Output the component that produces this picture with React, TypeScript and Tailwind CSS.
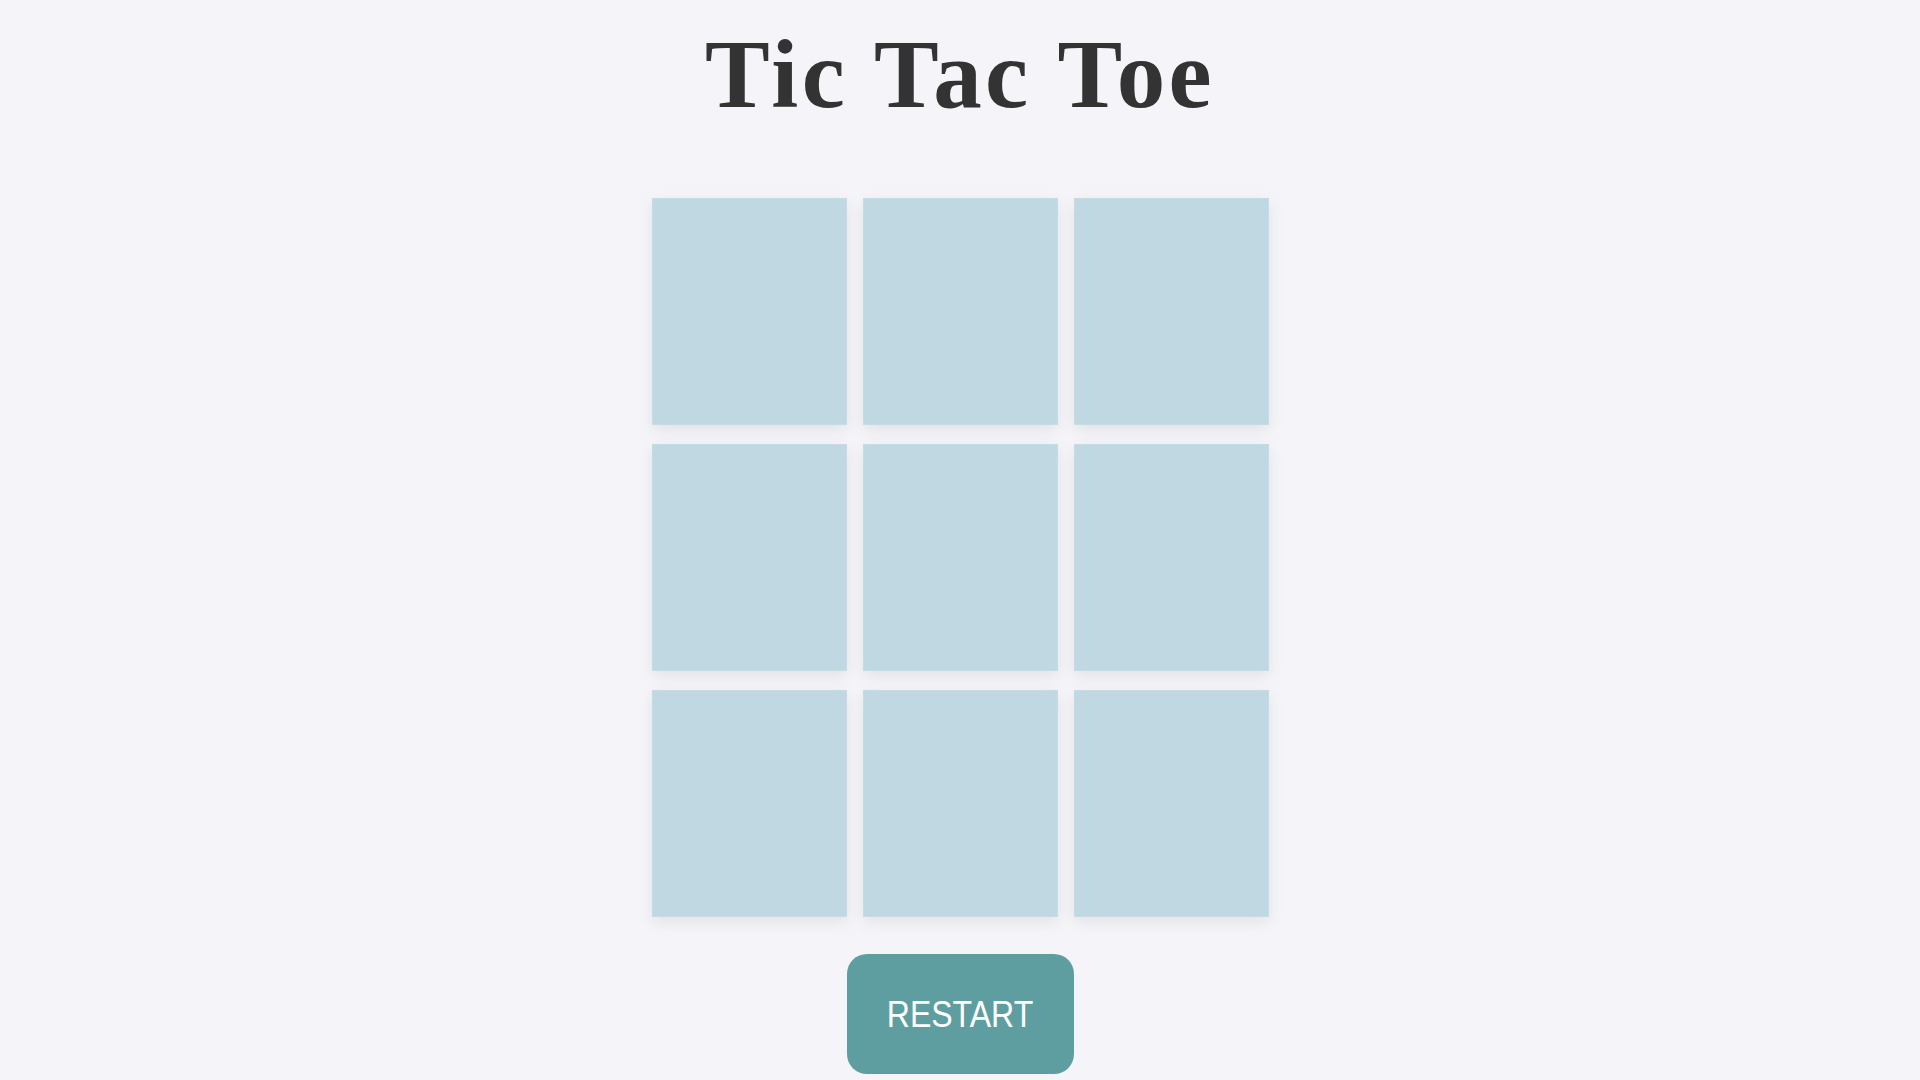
import { useState } from 'react';

type Mark = 'X' | 'O' | null;

export default function App() {
  const [cells, setCells] = useState<Mark[]>(Array(9).fill(null));
  const [turn, setTurn] = useState<'X' | 'O'>('X');

  function play(i: number) {
    if (cells[i]) return;
    const next = cells.slice();
    next[i] = turn;
    setCells(next);
    setTurn(turn === 'X' ? 'O' : 'X');
  }

  function restart() {
    setCells(Array(9).fill(null));
    setTurn('X');
  }

  return (
    <div className="min-h-screen bg-[#f4f4f9] flex flex-col items-center pt-[26px]">
      <h1 className="font-['Liberation_Serif',serif] font-bold text-[97px] leading-none tracking-[0.035em] text-[#333333]">
        Tic Tac Toe
      </h1>

      <div className="mt-[75px] grid grid-cols-[repeat(3,195px)] gap-x-[16px] gap-y-[19px]">
        {cells.map((c, i) => (
          <button
            key={i}
            onClick={() => play(i)}
            className="w-[195px] h-[227px] bg-[#c0d8e1] border border-[#c6dce4] shadow-[0_5px_15px_rgba(0,0,0,0.08)] flex items-center justify-center font-['Liberation_Sans',sans-serif] text-[80px] text-[#333333]"
          >
            {c}
          </button>
        ))}
      </div>

      <button
        onClick={restart}
        className="mt-[37px] w-[227px] h-[120px] rounded-[20px] bg-[#5f9ea0] text-white font-['Liberation_Sans',Arial,sans-serif] text-[32px]"
      >
        <span className="inline-block scale-y-[1.16]">RESTART</span>
      </button>
    </div>
  );
}
